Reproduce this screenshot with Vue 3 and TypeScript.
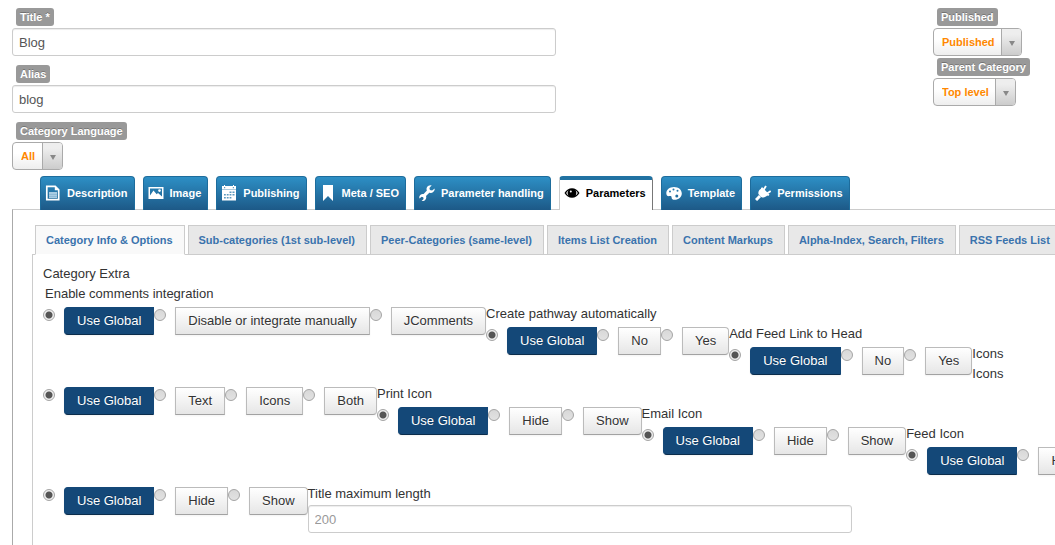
<script setup lang="ts">
import { ref } from 'vue'

interface OptionGroup {
  id: string
  label?: string
  indent?: boolean
  step: number
  options: string[]
}

const title = ref('Blog')
const alias = ref('blog')
const maxLength = ref('')

const mainTabs = [
  { icon: 'doc', label: 'Description' },
  { icon: 'image', label: 'Image' },
  { icon: 'calendar', label: 'Publishing' },
  { icon: 'bookmark', label: 'Meta / SEO' },
  { icon: 'wrench', label: 'Parameter handling' },
  { icon: 'eye', label: 'Parameters' },
  { icon: 'palette', label: 'Template' },
  { icon: 'plug', label: 'Permissions' },
]
const activeMain = ref('Parameters')

const subTabs = [
  'Category Info & Options',
  'Sub-categories (1st sub-level)',
  'Peer-Categories (same-level)',
  'Items List Creation',
  'Content Markups',
  'Alpha-Index, Search, Filters',
  'RSS Feeds List',
]
const activeSub = ref(subTabs[0])

const rows: { groups: OptionGroup[]; heading?: string; field?: string }[] = [
  {
    groups: [
      { id: 'comments', label: 'Enable comments integration', indent: true, step: 0, options: ['Use Global', 'Disable or integrate manually', 'JComments'] },
      { id: 'pathway', label: 'Create pathway automatically', step: 1, options: ['Use Global', 'No', 'Yes'] },
      { id: 'feedlink', label: 'Add Feed Link to Head', step: 2, options: ['Use Global', 'No', 'Yes'] },
    ],
    heading: 'Icons',
  },
  {
    groups: [
      { id: 'icons', step: 0, options: ['Use Global', 'Text', 'Icons', 'Both'] },
      { id: 'print', label: 'Print Icon', step: 0, options: ['Use Global', 'Hide', 'Show'] },
      { id: 'email', label: 'Email Icon', step: 1, options: ['Use Global', 'Hide', 'Show'] },
      { id: 'feed', label: 'Feed Icon', step: 2, options: ['Use Global', 'Hide', 'Show'] },
    ],
  },
  {
    groups: [{ id: 'feedshow', step: 0, options: ['Use Global', 'Hide', 'Show'] }],
    field: 'Title maximum length',
  },
]
</script>

<template>
  <form class="page" @submit.prevent>
    <div class="top">
      <div class="main-fields">
        <div class="field">
          <label class="badge" for="title">Title *</label>
          <input id="title" v-model="title" class="text" type="text" />
        </div>
        <div class="field">
          <label class="badge" for="alias">Alias</label>
          <input id="alias" v-model="alias" class="text" type="text" />
        </div>
        <div class="field">
          <label class="badge" for="language">Category Language</label>
          <span class="picker"><select id="language"><option>All</option></select></span>
        </div>
      </div>
      <div class="side-fields">
        <div class="field">
          <label class="badge" for="published">Published</label>
          <span class="picker"><select id="published"><option>Published</option></select></span>
        </div>
        <div class="field">
          <label class="badge" for="parent">Parent Category</label>
          <span class="picker"><select id="parent"><option>Top level</option></select></span>
        </div>
      </div>
    </div>

    <nav class="tabs">
      <button
        v-for="tab in mainTabs"
        :key="tab.label"
        type="button"
        class="tab"
        :class="{ active: tab.label === activeMain }"
        @click="activeMain = tab.label"
      >
        <svg class="icon" viewBox="0 0 16 16" aria-hidden="true">
          <g v-if="tab.icon === 'doc'">
            <path d="M1.800 1.300h8.400l3.500 3.500v9.900H1.800z" fill="none" stroke="#fff" stroke-width="1.700" />
            <path d="M9.800 1v4.200H14z" fill="#fff" />
            <path d="M4 7h8v6H4z" fill="#a9cce2" />
            <path d="M4 9.500h8M4 11.500h8" stroke="#7fb0d0" stroke-width=".6" />
          </g>
          <g v-else-if="tab.icon === 'image'">
            <path fill="#fff" fill-rule="evenodd" d="M0.500 2h15v12h-15zM2 3.500v9h12v-9z" />
            <path fill="#fff" d="M2 12V10.500L5.500 5.500l3.200 3.800 1.300-1.300 4 3.500V13H2z" />
            <circle cx="11.500" cy="5.600" r="1.300" fill="#fff" />
          </g>
          <g v-else-if="tab.icon === 'calendar'">
            <path fill="#fff" d="M1 1h2V0h1v1h8V0h1v1h2v14.500H1z" />
            <path fill="#2678aa" d="M3 2h1.200v1.200H3zM11.800 2H13v1.200h-1.200zM1 4.400h14v.7H1zM8.500 6.500h2V8h-2zM11.500 6.500h2V8h-2zM3 9h1.800v1.500H3zM5.800 9h1.800v1.500H5.800zM8.600 9h1.800v1.500H8.600zM11.500 9h2v1.500h-2zM3 12h1.800v1.500H3zM5.800 12h1.800v1.500H5.800zM8.600 12h1.800v1.500H8.600z" opacity=".75" />
          </g>
          <path v-else-if="tab.icon === 'bookmark'" fill="#fff" d="M3 0h10v16l-5-5-5 5z" />
          <path
            v-else-if="tab.icon === 'wrench'"
            fill="#fff"
            d="M15.700 3.400l-2.600 2.100-2.200-.6-.5-2 2.300-2.600C10.500-.3 8 1 7.600 3.300c-.2 1 .1 1.800.3 2.300L4.600 9C2.700 8.500.7 9.700.3 11.800c-.1.700 0 1.200.2 1.700L2.600 11.800l1.600.5.400 1.700-2 1.900c2 .6 4.300-.7 4.600-2.900.1-.8 0-1.400-.2-1.900l3.300-3.300c2.900.8 5.800-1.500 5.400-4.400z"
          />
          <g v-else-if="tab.icon === 'eye'">
            <path fill="#000" fill-rule="evenodd" d="M0.500 8C2.300 4.800 5 3.200 8 3.200S13.700 4.800 15.500 8C13.700 11.200 11 12.800 8 12.800S2.300 11.200.5 8zM2.200 8c.5 1.200 1.300 2 2.300 2.700C3.200 8.800 3.300 6.600 4.600 5.200 3.600 5.900 2.700 6.800 2.200 8zM13.800 8c-.5-1.200-1.300-2.100-2.400-2.700 1.300 1.500 1.300 3.700.1 5.300 1-.6 1.800-1.400 2.300-2.600z" />
            <circle cx="6.800" cy="6.600" r="1" fill="#fff" />
          </g>
          <path
            v-else-if="tab.icon === 'palette'"
            fill="#fff"
            fill-rule="evenodd"
            d="M8 2C3.500 2 .3 4.800.3 8.300c0 2.200 1.500 3.200 3 2.800 1.500-.4 2.400.1 2.300 1.400-.1 1.700 1.300 2.300 2.900 2.300 4.200 0 7.300-2.800 7.300-6.300C15.800 4.800 12.500 2 8 2zM4 5.600a1 1 0 1 1 0 2 1 1 0 0 1 0-2zM7.500 3.600a1 1 0 1 1 0 2 1 1 0 0 1 0-2zM11.500 4.700a1 1 0 1 1 0 2 1 1 0 0 1 0-2zM10.800 9.500a1.500 1.500 0 1 1 0 3 1.500 1.500 0 0 1 0-3z"
          />
          <g v-else fill="none" stroke="#fff">
            <path d="M8.500 5l2.500-4M12 8.500l3.700-2.500" stroke-width="1.900" />
            <path d="M7.300 2.300l7.200 7.400-1.300 1.300-1-.4c-1.500 1.700-4 2.400-6 1.300l-2.600-2.600c-.8-2 .2-4.200 2.500-5.500l-.2-.9z" fill="#fff" stroke="none" />
            <path d="M5 11L1 15" stroke-width="3" />
          </g>
        </svg>
        <span>{{ tab.label }}</span>
      </button>
    </nav>

    <section class="panel">
      <nav class="subtabs">
        <button
          v-for="tab in subTabs"
          :key="tab"
          type="button"
          class="subtab"
          :class="{ active: tab === activeSub }"
          @click="activeSub = tab"
        >
          {{ tab }}
        </button>
      </nav>
      <div class="content">
        <div class="heading">Category Extra</div>
        <div v-for="(row, r) in rows" :key="r" class="row">
          <fieldset v-for="group in row.groups" :key="group.id" class="group" :class="'step' + group.step">
            <legend v-if="group.label" :class="{ indent: group.indent }">{{ group.label }}</legend>
            <div class="choices">
              <template v-for="(option, i) in group.options" :key="option">
                <input :id="group.id + i" type="radio" :name="group.id" :checked="i === 0" />
                <label class="choice" :for="group.id + i">{{ option }}</label>
              </template>
            </div>
          </fieldset>
          <div v-if="row.heading" class="group step3">
            <div>{{ row.heading }}</div>
            <div>{{ row.heading }}</div>
          </div>
          <div v-if="row.field" class="group">
            <label class="plain" for="maxlength">{{ row.field }}</label>
            <input id="maxlength" v-model="maxLength" class="text wide" type="text" placeholder="200" />
          </div>
        </div>
      </div>
    </section>
  </form>
</template>

<style>
html,
body {
  overflow: hidden;
  background: #fff;
}
</style>

<style scoped>
.page {
  box-sizing: border-box;
  min-height: 100vh;
  padding: 8px 0 0 12px;
  display: flex;
  flex-direction: column;
  font: 13px/20px "Liberation Sans", Arial, sans-serif;
  color: #333;
}
.page * {
  box-sizing: border-box;
}
input,
select,
button {
  font-family: inherit;
}
.top {
  display: flex;
  justify-content: space-between;
}
.main-fields {
  display: flex;
  flex-direction: column;
  gap: 9px;
  flex: 0 1 544px;
}
.side-fields {
  display: flex;
  flex-direction: column;
  gap: 2px;
  width: 122px;
}
.field {
  display: flex;
  flex-direction: column;
  align-items: flex-start;
  gap: 2px;
}
.badge {
  margin-left: 4px;
  padding: 0 4px;
  height: 18px;
  border-radius: 3px;
  background: #999;
  color: #fff;
  font-size: 11px;
  font-weight: bold;
  line-height: 18px;
  text-shadow: 0 -1px 0 rgba(0, 0, 0, 0.25);
  white-space: nowrap;
}
.text {
  width: 100%;
  height: 28px;
  padding: 4px 6px;
  border: 1px solid #ccc;
  border-radius: 3px;
  background: #fff;
  box-shadow: inset 0 1px 1px rgba(0, 0, 0, 0.075);
  color: #555;
  font-size: 13px;
  line-height: 18px;
}
.text::placeholder {
  color: #999;
  opacity: 1;
}
.wide {
  display: block;
  width: 544px;
  margin-top: 1px;
}
.picker {
  display: flex;
  height: 28px;
  border: 1px solid #aaa;
  border-radius: 4px;
  overflow: hidden;
  background: linear-gradient(#fff 40%, #eee 100%);
  position: relative;
}
.picker select {
  appearance: none;
  border: 0;
  margin: 0;
  padding: 0 26px 0 8px;
  background: transparent;
  color: #ff8800;
  font-size: 11px;
  font-weight: bold;
}
.picker::before {
  content: "";
  position: absolute;
  top: 0;
  right: 0;
  bottom: 0;
  width: 19px;
  border-left: 1px solid #aaa;
  background: linear-gradient(#eee 20%, #ccc 100%);
  pointer-events: none;
}
.picker::after {
  content: "";
  position: absolute;
  top: 12px;
  right: 6px;
  border: 3px solid transparent;
  border-top: 5px solid #888;
  border-bottom: 0;
  pointer-events: none;
}
.tabs {
  display: flex;
  gap: 8px;
  margin-top: 6px;
  padding-left: 28px;
  position: relative;
}
.tab {
  display: flex;
  align-items: center;
  gap: 6px;
  height: 34px;
  padding: 0 6px 1px 4px;
  border: 1px solid #1d6c9c;
  border-bottom: 0;
  border-radius: 4px 4px 0 0;
  background: linear-gradient(#2d8fc5, #1d5987);
  color: #fff;
  font-size: 11px;
  font-weight: bold;
  white-space: nowrap;
}
.tab.active {
  border-color: #ccc #777 #fff #ccc;
  border-top: 4px solid #2172a2;
  padding-bottom: 4px;
  background: #fff;
  color: #000;
}
.icon {
  width: 16px;
  height: 16px;
  flex: none;
}
.panel {
  flex: 1;
  margin-top: -1px;
  padding: 15px 0 0 19px;
  border: solid #ccc;
  border-width: 1px 0 0 1px;
  border-left-color: #aaa;
  display: flex;
  flex-direction: column;
  overflow: hidden;
}
.subtabs {
  display: flex;
  gap: 3px;
  padding-left: 3px;
  position: relative;
}
.subtab {
  flex: none;
  height: 30px;
  padding: 0 11px 0 10px;
  border: 1px solid #ccc;
  background: #e8e8e8;
  color: #3a73ad;
  font-size: 11px;
  font-weight: bold;
  white-space: nowrap;
}
.subtab.active {
  background: #f9f9f9;
  border-bottom-color: #fff;
}
.content {
  flex: 1;
  margin-top: -1px;
  padding: 9px 0 0 10px;
  border: solid #ccc;
  border-width: 1px 0 0 1px;
  white-space: nowrap;
}
.row {
  display: flex;
  align-items: flex-start;
}
.row:not(:last-child) {
  min-height: 100px;
}
.group {
  flex: none;
  min-width: 0;
  margin: 0;
  padding: 0;
  border: 0;
}
.step1 {
  margin-top: 20px;
}
.step2 {
  margin-top: 40px;
}
.step3 {
  margin-top: 60px;
}
legend,
.plain {
  display: block;
  padding: 0;
  line-height: 20px;
}
.indent {
  padding-left: 2px;
}
.choices {
  display: flex;
  align-items: flex-start;
  padding-top: 3px;
}
.choices input {
  appearance: none;
  flex: none;
  width: 12px;
  height: 12px;
  margin: 2px 9px 0 0;
  border: 1px solid #a4a4a4;
  border-radius: 50%;
  background: linear-gradient(#d8d8d8, #e2e2e2);
}
.choices input:checked {
  background: radial-gradient(circle, #555 0 3px, #eee 4px);
}
.choice {
  height: 28px;
  padding: 3px 12px;
  border: 1px solid #bbb;
  border-bottom-color: #a2a2a2;
  background: linear-gradient(#fff, #e6e6e6);
  box-shadow: 0 1px 2px rgba(0, 0, 0, 0.05);
  line-height: 20px;
  text-shadow: 0 1px 1px rgba(255, 255, 255, 0.75);
}
.choice:last-child {
  border-radius: 0 4px 4px 0;
}
.choices input:first-child + .choice {
  border-radius: 4px 0 0 4px;
}
.choices input:checked + .choice {
  border-color: #144878 #144878 #0b2c4b;
  background: #144878;
  color: #fff;
  text-shadow: 0 -1px 0 rgba(0, 0, 0, 0.25);
}
</style>
